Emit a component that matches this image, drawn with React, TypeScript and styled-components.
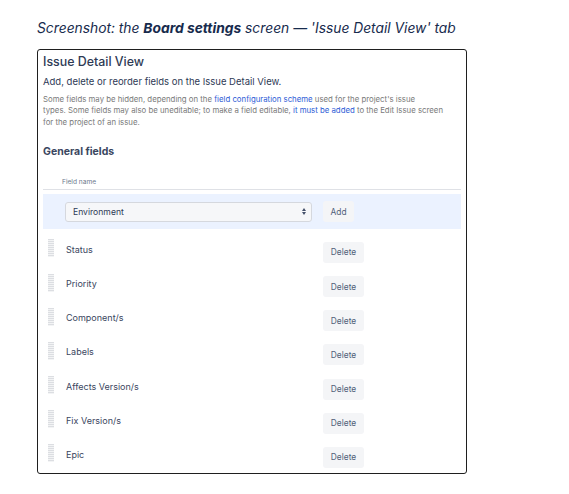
import React from 'react';
import styled, { createGlobalStyle } from 'styled-components';

const GlobalStyle = createGlobalStyle`
  html, body {
    margin: 0;
    padding: 0;
    background: #ffffff;
  }
  body {
    font-family: Inter, "Liberation Sans", Arial, sans-serif;
    -webkit-font-smoothing: antialiased;
  }
`;

const Page = styled.div`
  width: 569px;
  height: 494px;
  padding: 19px 0 0 37px;
  box-sizing: border-box;
  overflow: hidden;
`;

const Caption = styled.p`
  margin: 0 0 11px 0;
  font-size: 13.8px;
  line-height: 19px;
  font-style: italic;
  color: #172b4d;
  white-space: nowrap;

  b {
    font-weight: 700;
  }
`;

const Frame = styled.div`
  width: 430px;
  height: 425px;
  box-sizing: border-box;
  border: 1px solid #1f1f1f;
  border-radius: 3px;
  padding: 0 5px;
  overflow: hidden;
`;

const Title = styled.h2`
  margin: 3px 0 0 0;
  font-size: 12.4px;
  line-height: 18px;
  font-weight: 500;
  color: #2e3a55;
`;

const Intro = styled.p`
  margin: 4px 0 0 0;
  font-size: 9.5px;
  line-height: 14px;
  color: #2e3a55;
`;

const Note = styled.p`
  margin: 5px 0 0 0;
  font-size: 7.8px;
  line-height: 11.4px;
  color: #7a7a7a;
  white-space: nowrap;
`;

const Link = styled.a`
  color: #2d5cd6;
  text-decoration: none;
`;

const SectionTitle = styled.h3`
  margin: 17px 0 0 0;
  font-size: 10.5px;
  line-height: 14px;
  font-weight: 700;
  color: #3a4660;
`;

const TableHead = styled.div`
  margin-top: 18px;
  padding: 0 0 2px 19px;
  font-size: 6.6px;
  line-height: 10px;
  color: #6b778c;
  border-bottom: 1px solid #dfe1e6;
`;

const AddRow = styled.div`
  margin-top: 4px;
  height: 35px;
  background: #ebf2ff;
  display: flex;
  align-items: center;
  padding-left: 22px;
  gap: 11px;
`;

const Select = styled.div`
  width: 247px;
  height: 20px;
  box-sizing: border-box;
  border: 1px solid #d5d8de;
  border-radius: 3px;
  background: #f6f7f9;
  display: flex;
  align-items: center;
  justify-content: space-between;
  padding: 0 5px 0 7px;
  font-size: 8.6px;
  color: #2e3a55;
`;

const Arrows = styled.span`
  display: flex;
  flex-direction: column;
  gap: 1px;

  &::before,
  &::after {
    content: '';
    display: block;
    width: 0;
    height: 0;
    border-left: 2px solid transparent;
    border-right: 2px solid transparent;
  }
  &::before {
    border-bottom: 3px solid #44506a;
  }
  &::after {
    border-top: 3px solid #44506a;
  }
`;

const SmallButton = styled.button<{ $width: number }>`
  width: ${({ $width }) => $width}px;
  height: 21px;
  border: none;
  border-radius: 3px;
  background: #f4f5f7;
  font-family: inherit;
  font-size: 8.4px;
  color: #505f79;
  padding: 0;
`;

const Rows = styled.div`
  margin-top: 6px;
`;

const Row = styled.div`
  height: 34.2px;
  display: grid;
  grid-template-columns: 22px 258px auto;
  align-items: center;
`;

const Handle = styled.span`
  margin: 0 0 8px 5px;
  width: 6px;
  height: 18px;
  background: repeating-linear-gradient(
    to bottom,
    #dcdee2 0px,
    #dcdee2 1px,
    #f3f4f5 1px,
    #f3f4f5 2px
  );
`;

const FieldLabel = styled.span`
  padding: 0 0 6px 1px;
  font-size: 9px;
  color: #3a4660;
`;

const fields = [
  'Status',
  'Priority',
  'Component/s',
  'Labels',
  'Affects Version/s',
  'Fix Version/s',
  'Epic',
];

export default function App() {
  return (
    <>
      <GlobalStyle />
      <Page>
        <Caption>
          Screenshot: the <b>Board settings</b> screen — 'Issue Detail View' tab
        </Caption>
        <Frame>
          <Title>Issue Detail View</Title>
          <Intro>Add, delete or reorder fields on the Issue Detail View.</Intro>
          <Note>
            Some fields may be hidden, depending on the{' '}
            <Link href="#">field configuration scheme</Link> used for the project's issue
            <br />
            types. Some fields may also be uneditable; to make a field editable,{' '}
            <Link href="#">it must be added</Link> to the Edit Issue screen
            <br />
            for the project of an issue.
          </Note>
          <SectionTitle>General fields</SectionTitle>
          <TableHead>Field name</TableHead>
          <AddRow>
            <Select>
              Environment
              <Arrows />
            </Select>
            <SmallButton $width={31}>Add</SmallButton>
          </AddRow>
          <Rows>
            {fields.map(name => (
              <Row key={name}>
                <Handle />
                <FieldLabel>{name}</FieldLabel>
                <SmallButton $width={41}>Delete</SmallButton>
              </Row>
            ))}
          </Rows>
        </Frame>
      </Page>
    </>
  );
}
